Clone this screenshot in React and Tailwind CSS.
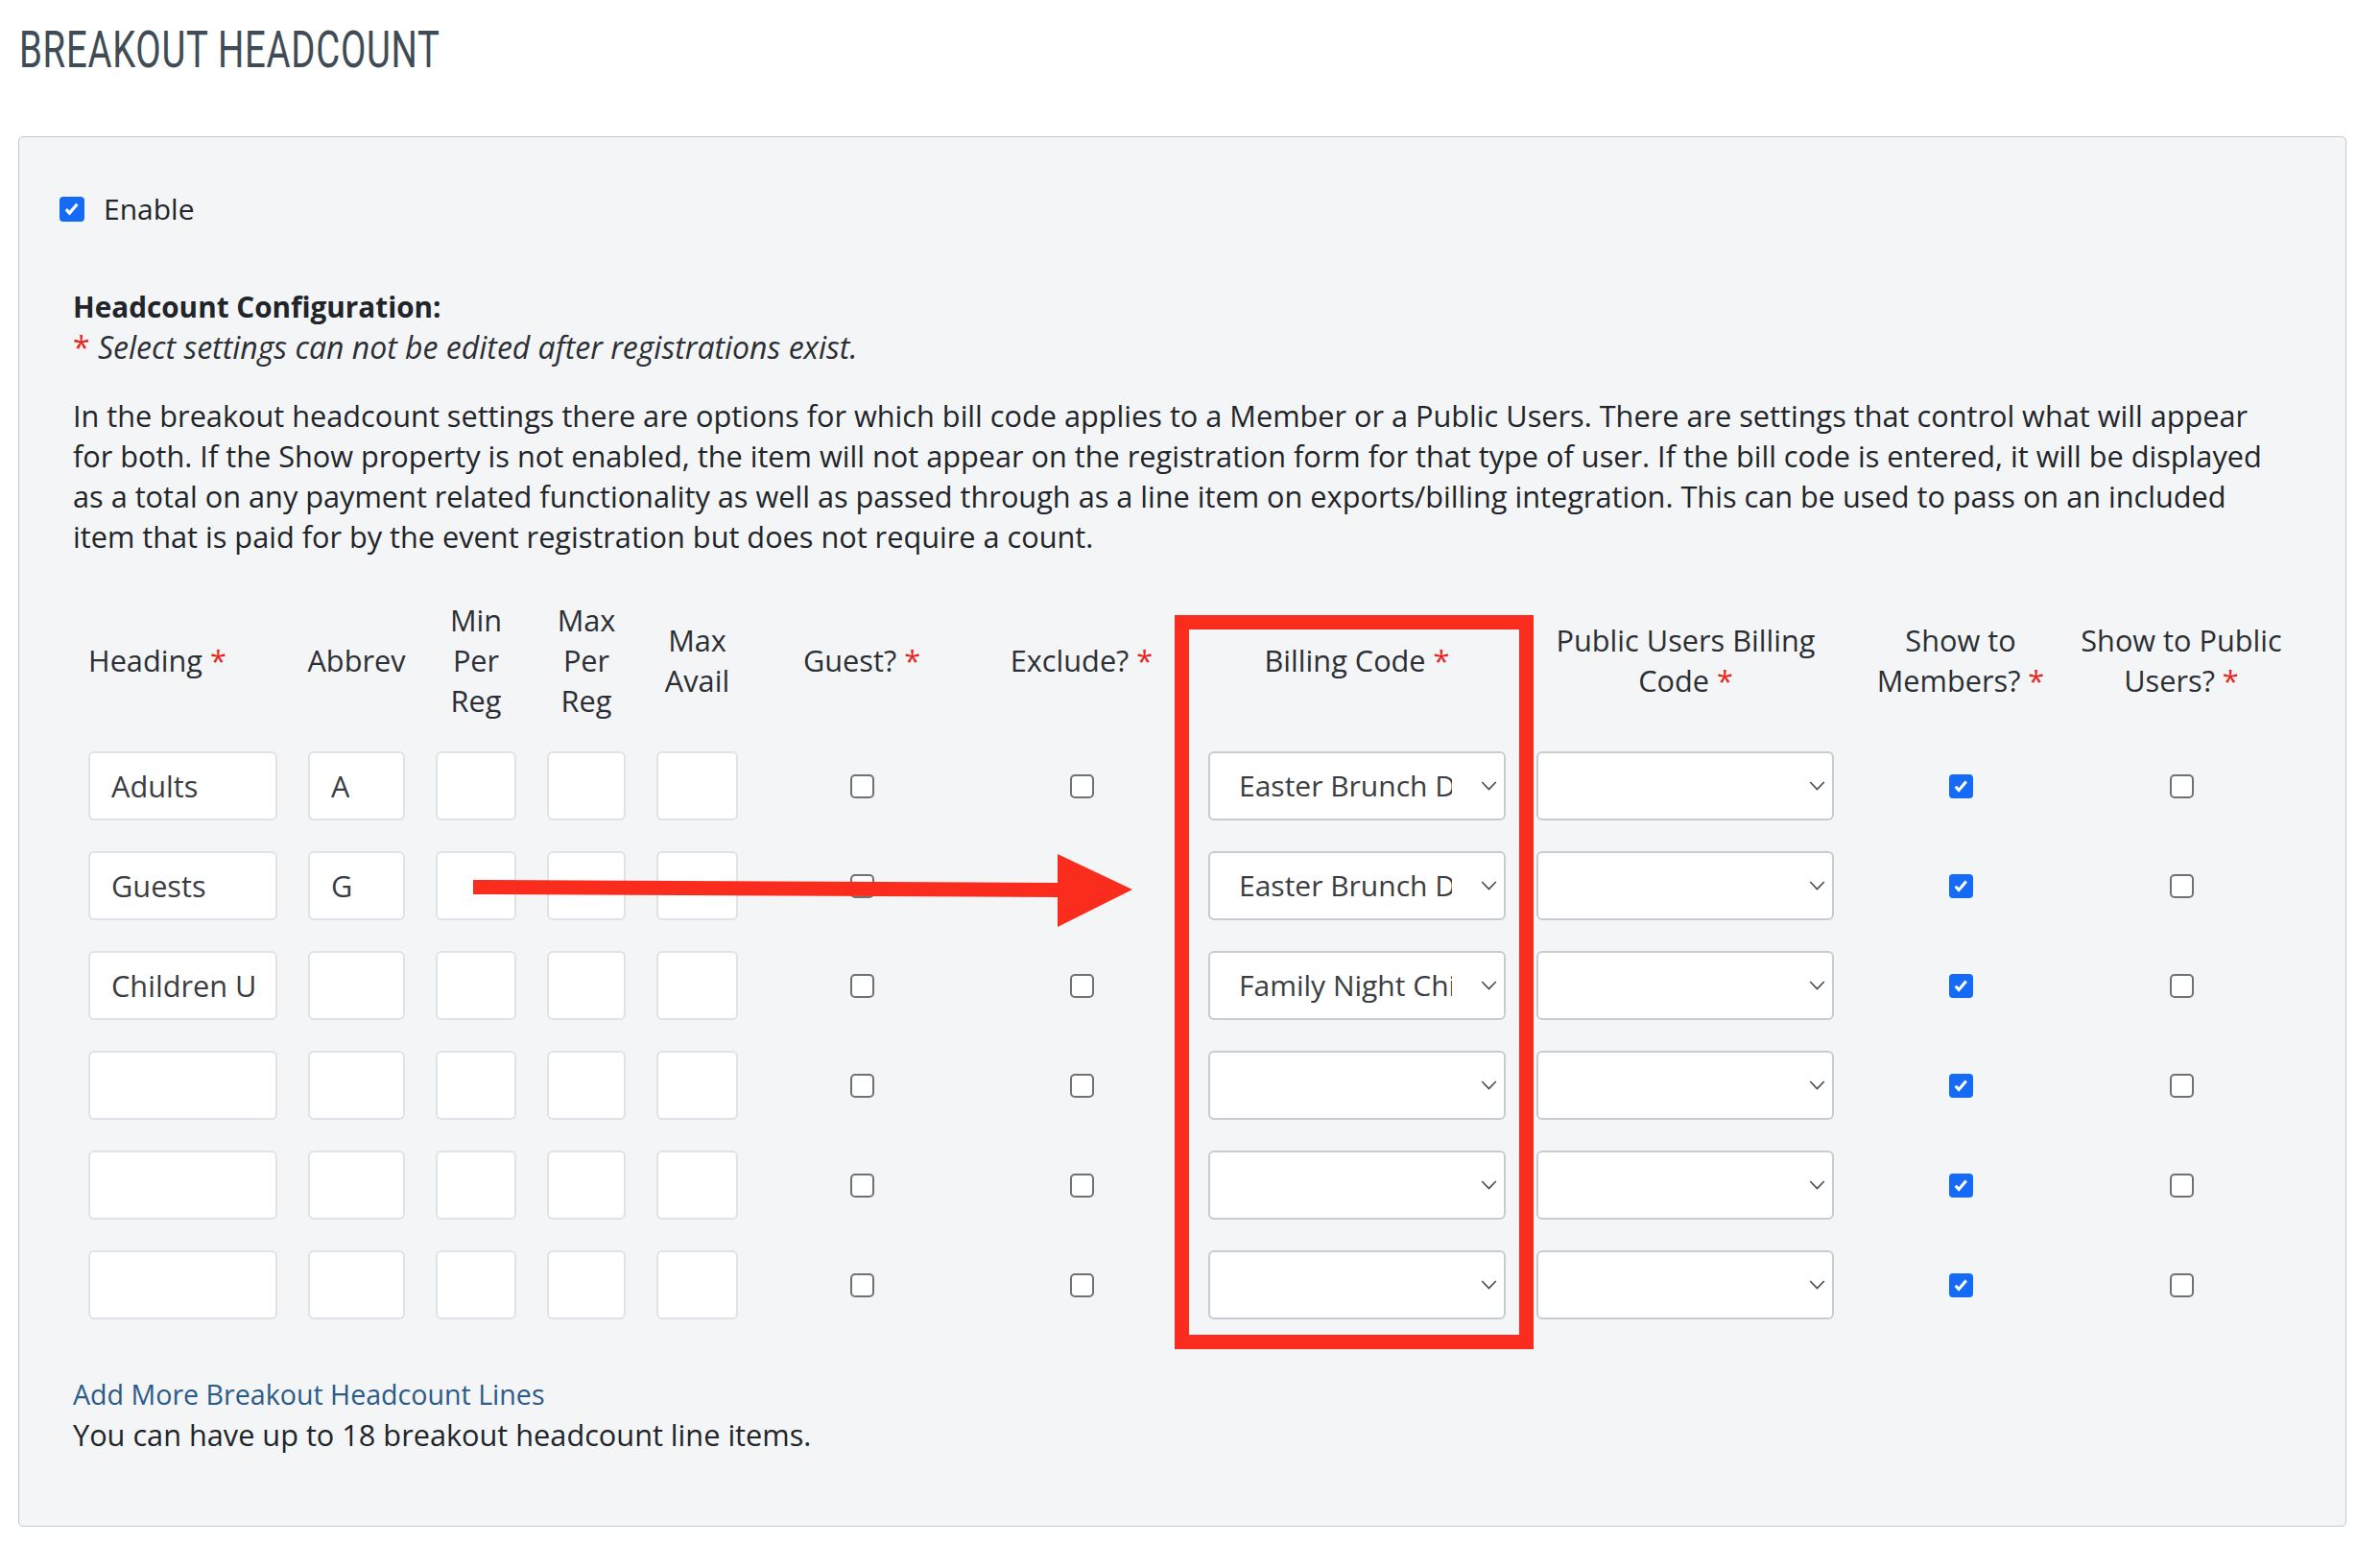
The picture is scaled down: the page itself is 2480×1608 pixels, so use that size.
import React from "react";

const rows = [
  { heading: "Adults", abbrev: "A", billing: "Easter Brunch Default", members: true },
  { heading: "Guests", abbrev: "G", billing: "Easter Brunch Default", members: true },
  { heading: "Children Under 12", abbrev: "", billing: "Family Night Children", members: true },
  { heading: "", abbrev: "", billing: "", members: true },
  { heading: "", abbrev: "", billing: "", members: true },
  { heading: "", abbrev: "", billing: "", members: true },
];

const cols =
  "grid grid-cols-[229px_133px_116px_114px_117px_226px_232px_342px_343px_230px_230px]";

function Req() {
  return <span className="text-[#e8251c]"> *</span>;
}

function Check({ on, size = "w-[25px] h-[25px]" }) {
  if (on) {
    return (
      <div className={`${size} rounded-[4px] bg-[#166bf6] flex items-center justify-center`}>
        <svg viewBox="0 0 24 24" className="w-[82%] h-[82%]">
          <path d="M5.5 12.5l4 4.5 9-10.5" fill="none" stroke="white" strokeWidth="3.6" strokeLinecap="butt" strokeLinejoin="miter" />
        </svg>
      </div>
    );
  }
  return <div className={`${size} rounded-[5px] border-2 border-[#6f7174] bg-white`} />;
}

function TextBox({ value, w }) {
  return (
    <div className={`${w} h-[72px] rounded-[6px] border-2 border-[#dfe2e6] bg-white px-[22px] flex items-center overflow-hidden whitespace-nowrap text-[#3a3d42]`}>
      <span className="overflow-hidden">{value}</span>
    </div>
  );
}

function SelectBox({ value }) {
  return (
    <div className="w-[310px] h-[72px] rounded-[6px] border-2 border-[#c8ccd1] bg-white pl-[30px] pr-[7px] flex items-center text-[30px] text-[#3a3d42]">
      <div className="flex-1 overflow-hidden whitespace-nowrap mr-[30px]">{value}&nbsp;</div>
      <svg viewBox="0 0 18 11" className="w-[17px] h-[10px]">
        <path d="M1 1l8 8.5 8-8.5" fill="none" stroke="#45484c" strokeWidth="1.7" />
      </svg>
    </div>
  );
}

function Cell({ children, align = "justify-center" }) {
  return <div className={`px-4 py-4 flex items-center whitespace-nowrap ${align}`}>{children}</div>;
}

export default function App() {
  return (
    <div className="min-h-screen bg-white font-['Open_Sans',sans-serif] text-[30.7px] leading-[42px] text-[#212529]">
      <div className="pl-[20px] pt-[22px] h-[142px]">
        <h1 className="origin-left scale-x-[0.71] font-['Roboto',sans-serif] text-[54px] leading-[60px] tracking-[1px] text-[#3f4c56] font-normal whitespace-nowrap">
          BREAKOUT HEADCOUNT
        </h1>
      </div>

      <div className="ml-[19px] mr-[35px] rounded-[5px] border border-[#c4c9ce] bg-[#f4f5f7] px-[42px] pt-[54px] pb-[74px]">
        <label className="flex items-center gap-[20px]">
          <Check on size="w-[26px] h-[26px]" />
          <span className="text-[30px] text-[#212529]">Enable</span>
        </label>

        <div className="px-[14px] mt-[60px]">
          <p className="font-bold text-[29.7px]">Headcount Configuration:</p>
          <p className="italic text-[32px] text-[#2b2f33]">
            <span className="text-[#e8251c] not-italic">*</span> Select settings can not be edited after registrations exist.
          </p>

          <p className="mt-[29px] whitespace-nowrap">
            In the breakout headcount settings there are options for which bill code applies to a Member or a Public Users. There are settings that control what will appear
            <br />
            for both. If the Show property is not enabled, the item will not appear on the registration form for that type of user. If the bill code is entered, it will be displayed
            <br />
            as a total on any payment related functionality as well as passed through as a line item on exports/billing integration. This can be used to pass on an included
            <br />
            item that is paid for by the event registration but does not require a count.
          </p>

          <div className="relative mt-[29px]">
            <div className={`${cols} text-[#2b2f33]`}>
              <Cell align="justify-start"><span>Heading<Req /></span></Cell>
              <Cell><span>Abbrev</span></Cell>
              <Cell><span className="text-center">Min<br />Per<br />Reg</span></Cell>
              <Cell><span className="text-center">Max<br />Per<br />Reg</span></Cell>
              <Cell><span className="text-center">Max<br />Avail</span></Cell>
              <Cell><span>Guest?<Req /></span></Cell>
              <Cell><span>Exclude?<Req /></span></Cell>
              <Cell><span>Billing Code<Req /></span></Cell>
              <Cell><span className="text-center">Public Users Billing<br />Code<Req /></span></Cell>
              <Cell><span className="text-center">Show to<br />Members?<Req /></span></Cell>
              <Cell><span className="text-center">Show to Public<br />Users?<Req /></span></Cell>
            </div>

            {rows.map((r, i) => (
              <div key={i} className={cols}>
                <Cell align="justify-start"><TextBox value={r.heading} w="w-[198px]" /></Cell>
                <Cell align="justify-start"><TextBox value={r.abbrev} w="w-[101px]" /></Cell>
                <Cell align="justify-start"><TextBox value="" w="w-[84px]" /></Cell>
                <Cell align="justify-start"><TextBox value="" w="w-[83px]" /></Cell>
                <Cell align="justify-start"><TextBox value="" w="w-[85px]" /></Cell>
                <Cell><Check on={false} /></Cell>
                <Cell><Check on={false} /></Cell>
                <Cell align="justify-start"><SelectBox value={r.billing} /></Cell>
                <Cell align="justify-start"><SelectBox value="" /></Cell>
                <Cell><Check on={r.members} /></Cell>
                <Cell><Check on={false} /></Cell>
              </div>
            ))}

            {/* annotation: red frame round the billing code column */}
            <div className="absolute left-[1148px] top-[32px] w-[374px] h-[765px] border-[15px] border-[#fa2c1d] pointer-events-none" />

            {/* annotation: arrow */}
            <svg className="absolute left-[410px] top-[270px] w-[780px] h-[100px] pointer-events-none" viewBox="0 0 780 100">
              <polygon points="7,38 616,41 616,11 694,48 616,87 616,56 7,53" fill="#fa2c1d" />
            </svg>
          </div>

          <div className="mt-[40px]">
            <a className="text-[28.6px] text-[#2d5b87]">Add More Breakout Headcount Lines</a>
            <p>You can have up to 18 breakout headcount line items.</p>
          </div>
        </div>
      </div>
    </div>
  );
}
